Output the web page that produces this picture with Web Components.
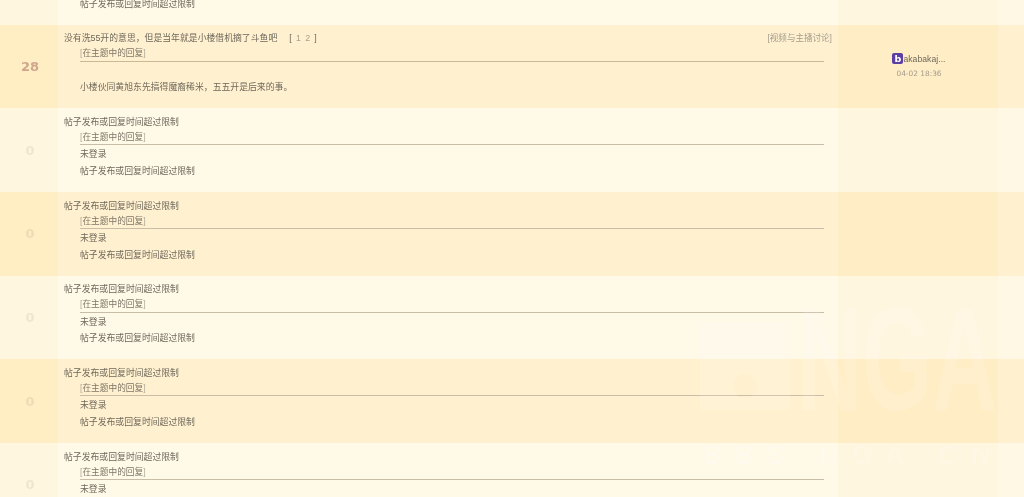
<!DOCTYPE html>
<html>
<head>
<meta charset="utf-8">
<style>
  html, body { margin: 0; height: 497px; overflow: hidden; background: #fff8e5; }
  body { font-family: "Liberation Sans", "Noto Sans CJK SC", sans-serif; position: relative; }
</style>
</head>
<body>
<template id="row-tpl">
  <style>
    :host {
      display: grid;
      grid-template-columns: 58px 1fr 160px 26px;
      height: 83.7px;
      background: #fff9e8;
      color: #6f695c;
      font-size: 8.85px;
    }
    :host([dark]) { background: #fff0cf; }
    .count {
      display: flex;
      align-items: center;
      justify-content: center;
      padding: 0 0 0 2px;
      background: #fff6e0;
      font: bold 13px "DejaVu Sans", sans-serif;
      color: #efe6cf;
    }
    :host([dark]) .count { background: #ffedc4; color: #ecdcb8; }
    :host([hot]) .count { color: #cfa78c; }
    .main { padding: 6.5px 6px 0 6px; line-height: 16.7px; min-width: 0; }
    .head { display: flex; justify-content: space-between; height: 14px; line-height: 15px; }
    .tag { color: #a39d8c; font-size: 8.55px; }
    .body { margin: 0 8px 0 16px; }
    .quote {
      height: 15.5px;
      line-height: 16px;
      border-bottom: 1px solid #c9bda8;
      color: #7d7667;
      font-size: 8.7px;
      margin-bottom: 1px;
    }
    .quote i { font-style: normal; color: #b3ab99; }
    :host([hot]) .quote { border-bottom-color: #cbb896; }
    .reply { background: #fff6e0; display: flex; flex-direction: column; align-items: center; padding: 28px 0 0 2px; }
    :host([dark]) .reply { background: #ffedc5; }
    .end { background: #fff8e5; }
    :host([dark]) .end { background: #fff0cf; }
  </style>
  <div class="count"><slot name="count">0</slot></div>
  <div class="main">
    <div class="head">
      <span><slot name="title">帖子发布或回复时间超过限制</slot></span>
      <span class="tag"><slot name="tag"></slot></span>
    </div>
    <div class="body">
      <div class="quote"><i>[</i>在主题中的回复<i>]</i></div>
      <slot></slot>
    </div>
  </div>
  <div class="reply"><slot name="reply"></slot></div>
  <div class="end"></div>
</template>

<template id="user-tpl">
  <style>
    :host { display: flex; flex-direction: column; align-items: center; }
    .name { display: flex; align-items: center; height: 12px; font: 8.6px "Liberation Sans", sans-serif; color: #6f695c; letter-spacing: .05px; }
    .badge {
      width: 11px; height: 11px; border-radius: 2px; background: #5b3fa5; color: #fff;
      font: bold 9.5px/11px "DejaVu Sans", sans-serif; text-align: center; letter-spacing: 0;
    }
    .date { margin-top: 3px; font: 7.4px/12px "DejaVu Sans", sans-serif; color: #a39c8c; }
  </style>
  <div class="name"><span class="badge"><slot name="letter"></slot></span><slot name="name"></slot></div>
  <div class="date"><slot name="date"></slot></div>
</template>

<template id="mark-tpl">
  <style>
    :host { position: absolute; left: 695px; top: 296px; width: 310px; height: 180px; pointer-events: none; }
    svg { display: block; width: 310px; height: 180px; fill: rgba(255,255,255,.13); }
    text { font-family: "Liberation Sans", sans-serif; }
    .big { font-size: 147px; font-weight: bold; }
    .small { font-size: 25px; fill: rgba(255,255,255,.22); }
  </style>
  <svg viewBox="0 0 310 180">
    <path fill-rule="evenodd" d="M5 26h90v88H5zM50 78a12 12 0 1 0 .01 0z"/>
    <text class="big" x="102" y="114" textLength="200" lengthAdjust="spacingAndGlyphs">NGA</text>
    <text class="small" x="10" y="168" textLength="285" lengthAdjust="spacing">BBS.NGA.CN</text>
  </svg>
</template>

<template id="list-tpl">
  <style>:host { display: block; margin-top: -59px; filter: blur(.35px); }</style>
  <slot></slot>
</template>

<thread-list>
  <forum-row><div>未登录</div><div>帖子发布或回复时间超过限制</div></forum-row>
  <forum-row dark hot>
    <span slot="count">28</span>
    <span slot="title">没有洗55开的意思，但是当年就是小楼借机摘了斗鱼吧<span style="margin-left:12px;letter-spacing:.9px;color:#a9a28f"><span style="color:#6f695c">[</span> 1 2 <span style="color:#6f695c">]</span></span></span>
    <span slot="tag">[视频与主播讨论]</span>
    <div style="height:16.7px"></div>
    <div>小楼伙同黄旭东先搞得魔裔稀米，五五开是后来的事。</div>
    <user-cell slot="reply"><span slot="letter">b</span><span slot="name">akabakaj...</span><span slot="date">04-02 18:36</span></user-cell>
  </forum-row>
  <forum-row><div>未登录</div><div>帖子发布或回复时间超过限制</div></forum-row>
  <forum-row dark><div>未登录</div><div>帖子发布或回复时间超过限制</div></forum-row>
  <forum-row><div>未登录</div><div>帖子发布或回复时间超过限制</div></forum-row>
  <forum-row dark><div>未登录</div><div>帖子发布或回复时间超过限制</div></forum-row>
  <forum-row><div>未登录</div><div>帖子发布或回复时间超过限制</div></forum-row>
</thread-list>
<nga-mark></nga-mark>

<script>
  function define(tag, tplId) {
    customElements.define(tag, class extends HTMLElement {
      constructor() {
        super();
        this.attachShadow({ mode: "open" });
        this.shadowRoot.appendChild(document.getElementById(tplId).content.cloneNode(true));
      }
    });
  }
  define("thread-list", "list-tpl");
  define("forum-row", "row-tpl");
  define("user-cell", "user-tpl");
  define("nga-mark", "mark-tpl");
</script>
</body>
</html>
